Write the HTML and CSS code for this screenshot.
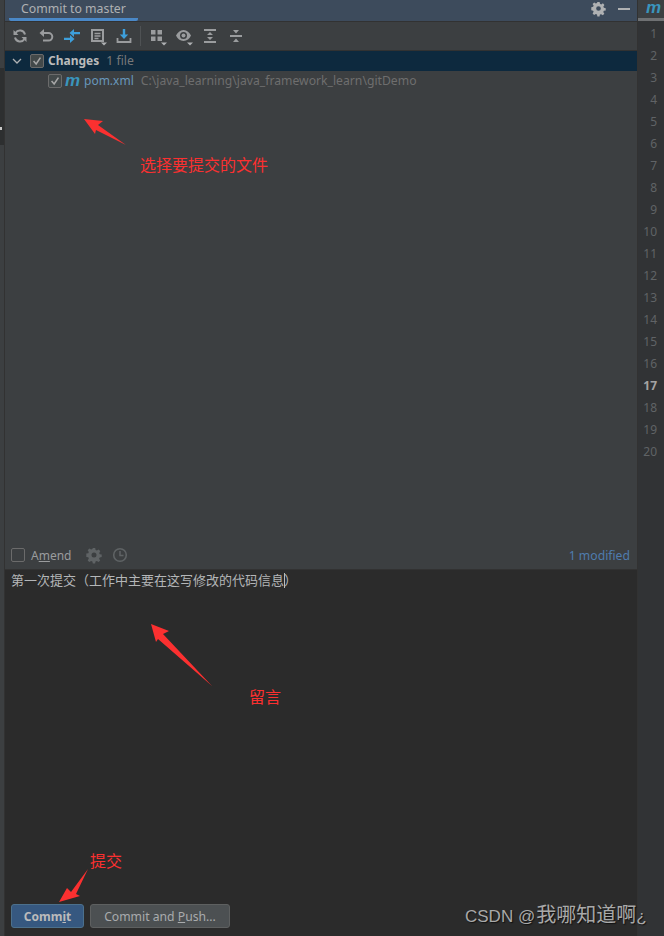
FILE: index.html
```html
<!DOCTYPE html>
<html lang="zh">
<head>
<meta charset="utf-8">
<title>Commit to master</title>
<link rel="stylesheet" href="styles.css">
</head>
<body>
<div class="app">
  <div class="strip"><div class="strip-dark"><span class="strip-mark"></span></div></div>
  <div class="main">
    <div class="tabbar">
      <div class="tab">Commit to master</div>
      <div class="tabtools">
        <svg class="ic" viewBox="0 0 16 16"><path fill="#afb1b3" fill-rule="evenodd" d="M6.800 1h2.400l.4 2 1.300.6 1.800-1.100 1.600 1.700-1.100 1.700.5 1.300 2 .4v2.400l-2 .4-.6 1.300 1.100 1.800-1.600 1.600-1.800-1.100-1.300.5-.4 2H6.800l-.4-2-1.300-.6-1.800 1.100-1.600-1.600 1.100-1.800-.5-1.300-2-.4V6.600l2-.4.5-1.300-1.100-1.700 1.700-1.700 1.700 1.100 1.300-.5zM8 5.500a2.500 2.500 0 1 0 0 5 2.500 2.500 0 0 0 0-5z"/></svg>
        <span class="minus"></span>
      </div>
    </div>
    <div class="toolbar">
      <svg class="ic" viewBox="0 0 16 16"><g fill="none" stroke="#9a9c9e" stroke-width="2"><path d="M13 6.500A5.200 5.200 0 0 0 3.500 5"/><path d="M3 9.500A5.200 5.200 0 0 0 12.500 11"/></g><path fill="#9a9c9e" d="M1.500 2v5h5zM14.500 14V9h-5z"/></svg>
      <svg class="ic" viewBox="0 0 16 16"><path fill="none" stroke="#9a9c9e" stroke-width="2" d="M5 5h5.500a3.800 3.800 0 0 1 0 7.600H5"/><path fill="#9a9c9e" d="M6 1v8L1.500 5z"/></svg>
      <svg class="ic" viewBox="0 0 16 16"><path fill="#3d9fdb" d="M10 1v8L5.500 5zM10 4h6v2.300h-6zM6 15V7l4.500 4zM0 9.700h6V12H0z"/></svg>
      <svg class="ic" viewBox="0 0 16 16"><path fill="none" stroke="#9a9c9e" stroke-width="2" d="M2 2h11v11H2z"/><path stroke="#9a9c9e" stroke-width="1.500" d="M4.500 5.500h6M4.500 8h6M4.500 10.500h4"/><path fill="#afb1b3" d="M11 14.500h6L14 17.500z"/></svg>
      <svg class="ic" viewBox="0 0 16 16"><path fill="#3d9fdb" d="M6.800 1h2.400v5.500h3L8 11 3.800 6.500h3z"/><path fill="none" stroke="#9a9c9e" stroke-width="1.800" d="M1.500 10v4h13v-4"/></svg>
      <span class="sep"></span>
      <svg class="ic" viewBox="0 0 16 16"><path fill="#9a9c9e" d="M1 2h4.500v4.500H1zM7.500 2H12v4.500H7.500zM1 8.500h4.500V13H1zM7.500 8.500H12V13H7.500z"/><path fill="#afb1b3" d="M11 14.500h6L14 17.500z"/></svg>
      <svg class="ic" viewBox="0 0 16 16"><path fill="#9a9c9e" fill-rule="evenodd" d="M7.500 2C4 2 1.500 4.500 0 7.500 1.500 10.500 4 13 7.500 13s6-2.500 7.500-5.500C13.500 4.500 11 2 7.500 2zm0 2a3.500 3.500 0 1 1 0 7 3.500 3.500 0 0 1 0-7z"/><circle cx="7.500" cy="7.500" r="2" fill="#9a9c9e"/><path fill="#afb1b3" d="M11 14.500h6L14 17.500z"/></svg>
      <svg class="ic" viewBox="0 0 16 16"><path fill="#9a9c9e" d="M2 1h12v2H2zM2 13h12v2H2zM8 4l3 3H5zM8 12L5 9h6z"/></svg>
      <svg class="ic" viewBox="0 0 16 16"><path fill="#9a9c9e" d="M2 7h12v2H2zM5 2h6L8 5.500zM8 10.500l3 3.500H5z"/></svg>
    </div>
    <div class="tree">
      <div class="row row-sel">
        <svg class="chev" viewBox="0 0 10 10"><path fill="none" stroke="#afb1b3" stroke-width="1.300" d="M1 3l4 4 4-4"/></svg>
        <span class="cb cb-on"><svg viewBox="0 0 14 14"><path fill="none" stroke="#a7a7a7" stroke-width="1.800" d="M3 7l3 3.500L11 3"/></svg></span>
        <b class="group">Changes</b>
        <span class="count">1 file</span>
      </div>
      <div class="row row-file">
        <span class="cb cb-on"><svg viewBox="0 0 14 14"><path fill="none" stroke="#a7a7a7" stroke-width="1.800" d="M3 7l3 3.500L11 3"/></svg></span>
        <span class="mvn">m</span>
        <span class="fname">pom.xml</span>
        <span class="path">C:\java_learning\java_framework_learn\gitDemo</span>
      </div>
    </div>
    <div class="amendbar">
      <span class="cb cb-large"></span>
      <span class="amend">A<u>m</u>end</span>
      <svg class="ic amend-ic" viewBox="0 0 16 16"><path fill="#5f6365" fill-rule="evenodd" d="M6.800 1h2.400l.4 2 1.300.6 1.800-1.100 1.600 1.700-1.100 1.700.5 1.300 2 .4v2.400l-2 .4-.6 1.300 1.100 1.800-1.600 1.600-1.800-1.100-1.300.5-.4 2H6.800l-.4-2-1.300-.6-1.800 1.100-1.600-1.600 1.100-1.800-.5-1.300-2-.4V6.600l2-.4.5-1.300-1.100-1.700 1.700-1.700 1.700 1.100 1.300-.5zM8 5.500a2.500 2.500 0 1 0 0 5 2.500 2.500 0 0 0 0-5z"/></svg>
      <svg class="ic" viewBox="0 0 16 16"><circle cx="8" cy="8" r="6.300" fill="none" stroke="#5f6365" stroke-width="1.600"/><path fill="none" stroke="#5f6365" stroke-width="1.500" d="M8 4v4.500h3.500"/></svg>
      <span class="modified">1 modified</span>
    </div>
    <div class="message">
      <div class="msg-text">第一次提交<span class="paren">（</span>工作中主要在这写修改的代码信息<span class="caret"></span><span class="paren">）</span></div>
      <div class="buttons">
        <button class="btn btn-primary">Comm<u>i</u>t</button>
        <button class="btn">Commit and <u>P</u>ush...</button>
      </div>
    </div>
  </div>
  <div class="gutter">
    <div class="gutter-tab">m</div>
    <ol class="lines">
      <li>1</li><li>2</li><li>3</li><li>4</li><li>5</li><li>6</li><li>7</li><li>8</li><li>9</li><li>10</li>
      <li>11</li><li>12</li><li>13</li><li>14</li><li>15</li><li>16</li><li class="cur">17</li><li>18</li><li>19</li><li>20</li>
    </ol>
  </div>
</div>
<svg class="arrows" viewBox="0 0 664 936">
  <path fill="#fb3030" d="M84 119L103 121 98 125 126 145 96 130 95 134z"/>
  <path fill="#fb3030" d="M151 624L169 631 163 634 212 686 158 639 156 642z"/>
  <path fill="#fb3030" d="M59 902L67 888 71 892 88 869 76 894 80 896z"/>
</svg>
<span class="note note-files">选择要提交的文件</span>
<span class="note note-msg">留言</span>
<span class="note note-commit">提交</span>
<span class="watermark">CSDN @<span class="wm-cjk">我哪知道啊</span>¿</span>
</body>
</html>
```
FILE: styles.css
```css
* { box-sizing: border-box; }
html, body { margin: 0; padding: 0; }
body {
  width: 664px;
  height: 936px;
  position: relative;
  overflow: hidden;
  background: #2b2b2b;
  font-family: "Liberation Sans", "Noto Sans CJK SC", sans-serif;
  font-size: 13px;
  color: #afb1b3;
}
.app { display: flex; height: 936px; }
.strip { width: 5px; padding-top: 68px; background: #3c3f41; border-right: 1px solid #323232; }
.strip-dark { height: 77px; padding-top: 59px; background: #2d2f30; }
.strip-mark { display: block; width: 2px; height: 3px; background: #c8c8c8; }
.main { width: 632px; display: flex; flex-direction: column; background: #3c3f41; }
.tabbar {
  height: 22px;
  display: flex;
  justify-content: space-between;
  background: #3d4b5c;
  border-bottom: 1px solid #323232;
}
.tab {
  width: 129px;
  margin-left: 4px;
  padding-left: 12px;
  line-height: 17px;
  color: #afb1b3;
  font-family: "Noto Sans", sans-serif;
  font-size: 12.300px;
  white-space: nowrap;
  border-bottom: 3px solid #4a88c7;
  border-radius: 0 0 2px 2px;
  height: 21px;
}
.tabtools { display: flex; align-items: center; gap: 11px; padding-right: 7px; height: 17px; }
.tabtools .ic { width: 15px; height: 15px; margin-right: 1px; }
.minus { width: 12px; height: 2px; background: #afb1b3; }
.toolbar {
  height: 29px;
  display: flex;
  align-items: center;
  gap: 10px;
  padding-left: 7px;
  border-bottom: 1px solid #323232;
}
.ic { width: 16px; height: 16px; display: block; flex: none; overflow: visible; }
.sep { width: 1px; height: 20px; background: #4f5254; margin: 0 -1px 0 -2px; }
.tree { flex: 1; }
.row { display: flex; align-items: center; height: 20px; }
.row-sel { background: #0d293e; padding-left: 7px; }
.chev { width: 10px; height: 10px; margin-right: 8px; }
.cb {
  width: 14px;
  height: 14px;
  border: 1px solid #6b6b6b;
  border-radius: 2px;
  background: #43494a;
  display: block;
  flex: none;
}
.cb svg { display: block; width: 12px; height: 12px; }
.group { margin-left: 4px; color: #bbbbbb; font-family: "Noto Sans", sans-serif; font-size: 12px; line-height: 18px; }
.count { margin-left: 7px; color: #787878; font-family: "Noto Sans", sans-serif; font-size: 12.200px; line-height: 18px; }
.row-file { padding-left: 43px; }
.mvn { margin-left: 3px; width: 16px; color: #3a95bd; font: italic bold 17px/18px "Liberation Sans", sans-serif; }
.fname { margin-left: 3px; color: #6897bb; font-family: "Noto Sans", sans-serif; font-size: 12px; line-height: 18px; }
.path { margin-left: 7px; color: #6e6e6e; font-family: "Noto Sans", sans-serif; font-size: 12.200px; line-height: 18px; }
.amendbar {
  height: 29px;
  display: flex;
  align-items: center;
  padding: 0 7px 0 6px;
  border-bottom: 1px solid #323232;
}
.cb-large { background: #3c3f41; }
.amend { margin: 0 15px 0 6px; color: #9a9c9e; font-family: "Noto Sans", sans-serif; font-size: 12px; }
.amend-ic { margin-right: 10px; }
.modified { margin-left: auto; color: #4f7cae; font-family: "Noto Sans", sans-serif; font-size: 12.200px; }
.message { flex: none; height: 366px; display: flex; flex-direction: column; justify-content: space-between; background: #2b2b2b; padding: 1px 0 8px 6px; }
.msg-text { font: 13px/18px "Noto Sans CJK SC", sans-serif; color: #b4b6b8; }
.paren { font-family: "Noto Sans CJK TC", sans-serif; }
.caret { display: inline-block; width: 1px; height: 15px; background: #bbbbbb; vertical-align: -3px; margin-right: -1px; }
.buttons { display: flex; gap: 6px; }
.btn {
  height: 24px;
  padding: 0;
  border: 1px solid #5e6060;
  border-radius: 3px;
  background: #4c5052;
  color: #a9abad;
  font-family: "Noto Sans", sans-serif;
  font-size: 12.200px;
  width: 140px;
}
.btn-primary { width: 73px; background: #365880; border-color: #4c708c; color: #bbbbbb; font-weight: bold; font-size: 12px; }
.gutter { flex: 1; min-width: 0; background: #313335; border-left: 1px solid #323232; }
.gutter-tab {
  height: 21px;
  background: #3c3f41;
  border-bottom: 3px solid #6f7173;
  color: #3a95bd;
  font: italic bold 17px/15px "Liberation Sans", sans-serif;
  padding-left: 8px;
}
.lines { list-style: none; margin: 0; padding: 2px 7px 0 0; text-align: right; color: #606366; font: 12px/22px "Noto Sans", sans-serif; }
.lines .cur { color: #a4a3a3; font-weight: bold; }
.arrows { position: absolute; left: 0; top: 0; width: 664px; height: 936px; pointer-events: none; }
.note { position: absolute; color: #fb3030; font: 16px/20px "Noto Sans CJK SC", sans-serif; white-space: nowrap; }
.note-files { left: 140px; top: 154px; }
.note-msg { left: 249px; top: 686px; }
.note-commit { left: 90px; top: 850px; }
.watermark { position: absolute; left: 465px; top: 903px; color: #a9a9a9; font: 17px/24px "Liberation Sans", "Noto Sans CJK SC", sans-serif; white-space: nowrap; text-shadow: 1px 1px 1px #111; }
.wm-cjk { font-size: 20px; margin-left: 1px; }
```
